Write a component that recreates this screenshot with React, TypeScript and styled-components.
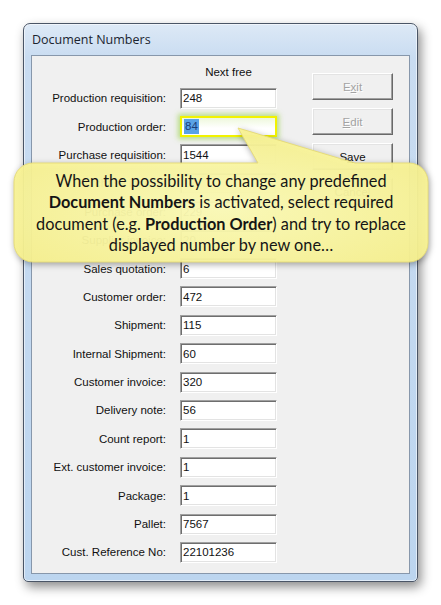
import React from 'react';
import styled, { createGlobalStyle } from 'styled-components';

const GlobalStyle = createGlobalStyle`
  body {
    margin: 0;
    background: #ffffff;
    font-family: "Liberation Sans", Arial, sans-serif;
  }
`;

const Page = styled.div`
  position: relative;
  width: 441px;
  height: 605px;
  padding: 23px 0 0 23px;
  box-sizing: border-box;
  overflow: hidden;
`;

const Window = styled.div`
  width: 395px;
  height: 559px;
  box-sizing: border-box;
  display: flex;
  flex-direction: column;
  padding: 0 7px 7px 7px;
  border: 1px solid #4a5566;
  border-radius: 7px 7px 5px 5px;
  background: linear-gradient(180deg, #dde9f6 0%, #c9dcf1 6%, #bcd5ef 100%);
  box-shadow: inset 0 0 0 1px rgba(255, 255, 255, 0.55), 3px 5px 11px rgba(0, 0, 0, 0.45);
`;

const TitleBar = styled.div`
  height: 31px;
  display: flex;
  align-items: center;
  padding-left: 1px;
  font-family: "Open Sans", "Noto Sans", sans-serif;
  font-size: 12.5px;
  color: #1b2430;
`;

const Client = styled.div`
  flex: 1;
  display: flex;
  background: #f0f0f0;
  border: 1px solid #8797ab;
`;

const Form = styled.div`
  display: grid;
  grid-template-columns: 134px 97px;
  grid-template-rows: 20px;
  grid-auto-rows: 28.4px;
  column-gap: 14px;
  align-items: center;
  padding-top: 8px;
  font-size: 11.5px;
  color: #111;
`;

const Header = styled.div`
  grid-column: 2;
  align-self: start;
  height: 16px;
  line-height: 16px;
  text-align: center;
`;

const Label = styled.div`
  text-align: right;
  white-space: nowrap;
`;

const Field = styled.div<{ $highlight?: boolean }>`
  height: 21px;
  box-sizing: border-box;
  display: flex;
  align-items: center;
  padding-left: 2px;
  background: #fff;
  border: 1px solid;
  border-color: #a0a0a0 #ffffff #ffffff #a0a0a0;
  box-shadow: inset 1px 1px #6e6e6e, inset -1px -1px #e3e3e3;
  ${({ $highlight }) =>
    $highlight &&
    `
    border: 2px solid #f2f200;
    background: linear-gradient(180deg, #eef8dc, #ffffff 60%);
    box-shadow: 0 0 5px 2px rgba(165, 215, 95, 0.75);
  `}
`;

const Selected = styled.span`
  background: #5aa2e6;
  color: #1c3d7a;
  padding: 0 1px;
  line-height: 15px;
`;

const Buttons = styled.div`
  display: flex;
  flex-direction: column;
  gap: 8px;
  margin-left: 35px;
  padding-top: 17px;
`;

const Button = styled.div<{ $disabled?: boolean }>`
  width: 81px;
  height: 27px;
  box-sizing: border-box;
  display: flex;
  align-items: center;
  justify-content: center;
  font-size: 11.5px;
  background: #f0f0f0;
  border: 1px solid;
  border-color: #ffffff #696969 #696969 #ffffff;
  box-shadow: inset -1px -1px #a0a0a0, inset 1px 1px #e3e3e3;
  color: ${({ $disabled }) => ($disabled ? '#a3a3a3' : '#111')};
  text-shadow: ${({ $disabled }) => ($disabled ? '1px 1px #ffffff' : 'none')};
`;

const Callout = styled.div`
  position: absolute;
  left: 14px;
  top: 163px;
  width: 414px;
  height: 99px;
  display: flex;
  align-items: center;
  justify-content: center;
`;

const CalloutShape = styled.svg`
  position: absolute;
  left: 0;
  top: -36px;
  overflow: visible;
  filter: drop-shadow(1px 2px 3px rgba(0, 0, 0, 0.35));
`;

const CalloutText = styled.div`
  position: relative;
  font-family: "Lato", "Open Sans", sans-serif;
  font-size: 16.3px;
  line-height: 21.3px;
  text-align: center;
  white-space: nowrap;
  color: #151515;

  b {
    font-weight: 700;
  }
`;

const rows: [string, string][] = [
  ['Production requisition:', '248'],
  ['Production order:', '84'],
  ['Purchase requisition:', '1544'],
  ['Purchase inquiry:', '12'],
  ['Purchase order:', '229'],
  ['Supplier invoice:', '20'],
  ['Sales quotation:', '6'],
  ['Customer order:', '472'],
  ['Shipment:', '115'],
  ['Internal Shipment:', '60'],
  ['Customer invoice:', '320'],
  ['Delivery note:', '56'],
  ['Count report:', '1'],
  ['Ext. customer invoice:', '1'],
  ['Package:', '1'],
  ['Pallet:', '7567'],
  ['Cust. Reference No:', '22101236'],
];

export default function App() {
  return (
    <Page>
      <GlobalStyle />
      <Window>
        <TitleBar>Document Numbers</TitleBar>
        <Client>
          <Form>
            <Header>Next free</Header>
            {rows.map(([label, value]) => (
              <React.Fragment key={label}>
                <Label>{label}</Label>
                {label === 'Production order:' ? (
                  <Field $highlight>
                    <Selected>{value}</Selected>
                  </Field>
                ) : (
                  <Field>{value}</Field>
                )}
              </React.Fragment>
            ))}
          </Form>
          <Buttons>
            <Button $disabled>
              E<u>x</u>it
            </Button>
            <Button $disabled>
              <u>E</u>dit
            </Button>
            <Button>
              S<u>a</u>ve
            </Button>
            <Button>Cancel</Button>
          </Buttons>
        </Client>
      </Window>

      <Callout>
        <CalloutShape width="414" height="135" viewBox="0 0 414 135">
          <defs>
            <radialGradient id="cg" cx="50%" cy="60%" r="60%">
              <stop offset="0%" stopColor="#fdfcb8" />
              <stop offset="100%" stopColor="#f8f290" />
            </radialGradient>
          </defs>
          <path
            d="M19 36 H244 L224 1 L341 36 H395 A19 19 0 0 1 414 55 V116 A19 19 0 0 1 395 135 H19 A19 19 0 0 1 0 116 V55 A19 19 0 0 1 19 36 Z"
            fill="url(#cg)"
            fillOpacity="0.95"
            stroke="#e6dc7a"
            strokeWidth="1"
          />
        </CalloutShape>
        <CalloutText>
          When the possibility to change any predefined
          <br />
          <b>Document Numbers</b> is activated, select required
          <br />
          document (e.g. <b>Production Order</b>) and try to replace
          <br />
          displayed number by new one…
        </CalloutText>
      </Callout>
    </Page>
  );
}
